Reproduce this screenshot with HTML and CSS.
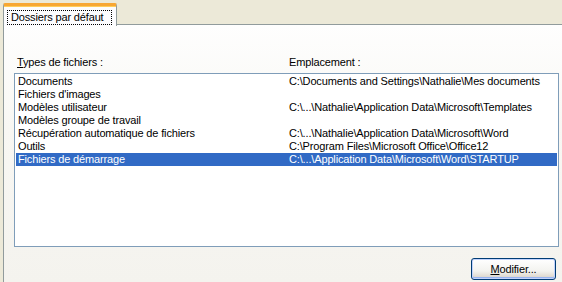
FILE: index.html
```html
<!DOCTYPE html>
<html>

<head>
    <title>Options - Dossiers par défaut</title>
    <link rel="stylesheet" href="styles.css">
</head>

<body>
    <div class="tabs">
        <div class="tab">
            <span class="focus">Dossiers par défaut</span>
        </div>
        <div class="tab-line"></div>
    </div>

    <div class="panel">
        <div class="labels">
            <div class="col-a"><u>T</u>ypes de fichiers :</div>
            <div class="col-b">Emplacement :</div>
        </div>

        <div class="list">
            <div class="row">
                <div class="col-a">Documents</div>
                <div class="col-b">C:\Documents and Settings\Nathalie\Mes documents</div>
            </div>
            <div class="row">
                <div class="col-a">Fichiers d'images</div>
                <div class="col-b"></div>
            </div>
            <div class="row">
                <div class="col-a">Modèles utilisateur</div>
                <div class="col-b">C:\...\Nathalie\Application Data\Microsoft\Templates</div>
            </div>
            <div class="row">
                <div class="col-a">Modèles groupe de travail</div>
                <div class="col-b"></div>
            </div>
            <div class="row">
                <div class="col-a">Récupération automatique de fichiers</div>
                <div class="col-b">C:\...\Nathalie\Application Data\Microsoft\Word</div>
            </div>
            <div class="row">
                <div class="col-a">Outils</div>
                <div class="col-b">C:\Program Files\Microsoft Office\Office12</div>
            </div>
            <div class="row selected">
                <div class="col-a">Fichiers de démarrage</div>
                <div class="col-b">C:\...\Application Data\Microsoft\Word\STARTUP</div>
            </div>
        </div>

        <div class="actions">
            <button class="btn"><u>M</u>odifier...</button>
        </div>
    </div>
</body>

</html>
```

FILE: styles.css
```css
body {
    margin: 0;
    background-color: #ece9d8;
    font-family: "Liberation Sans", Arial, sans-serif;
    font-size: 11px;
    letter-spacing: -0.15px;
    color: #000;
    overflow: hidden;
}

.tabs {
    display: flex;
    align-items: flex-end;
    height: 25px;
    padding-left: 3px;
}

.tab {
    box-sizing: border-box;
    width: 114px;
    height: 23px;
    background: #fcfcfe;
    border: 1px solid #919b9c;
    border-top: 3px solid #f7a734;
    border-bottom: none;
    border-radius: 2px 2px 0 0;
    padding: 0 4px 0 3px;
    display: flex;
    align-items: center;
    box-shadow: inset 0 1px 0 #ffcd5a;
    position: relative;
    z-index: 1;
    margin-bottom: -1px;
}

.focus {
    display: block;
    width: 100%;
    height: 13px;
    line-height: 13px;
    border: 1px dotted #000;
    padding-left: 3px;
    margin-top: 2px;
}

.tab-line {
    flex: 1;
    border-bottom: 1px solid #919b9c;
}

.panel {
    box-sizing: border-box;
    margin-left: 3px;
    margin-top: -1px;
    height: 258px;
    border-left: 1px solid #919b9c;
    border-top: 1px solid #919b9c;
    background: linear-gradient(#fefefe, #f8f7f3 40%, #f4f3ee);
    padding: 31px 0 0 10px;
}

.labels,
.row {
    display: flex;
    height: 13px;
    line-height: 13px;
}

.labels {
    margin-bottom: 4px;
}

.col-a {
    width: 272px;
    padding-left: 3px;
    white-space: nowrap;
}

.col-b {
    white-space: nowrap;
}

.list {
    width: 543px;
    height: 171px;
    background: #fff;
    border: 1px solid #7f9db9;
    padding-top: 1px;
    box-sizing: content-box;
}

.list .row {
    margin-left: 1px;
    margin-right: 1px;
}

.list .col-a {
    width: 271px;
    padding-left: 2px;
}

.row.selected {
    background: #316ac5;
    color: #fff;
}

.actions {
    display: flex;
    justify-content: flex-end;
    width: 542px;
    margin-top: 11px;
}

.btn {
    width: 85px;
    height: 22px;
    font-family: "Liberation Sans", Arial, sans-serif;
    font-size: 11px;
    letter-spacing: -0.15px;
    color: #000;
    border: 1px solid #003c74;
    border-radius: 3px;
    background: linear-gradient(#ffffff, #f3f3ef 60%, #d6d0c5);
    box-shadow: inset 0 0 0 1px #c2d3fc, inset 0 -1px 0 1px #98b4f0;
    padding: 0;
}
```
